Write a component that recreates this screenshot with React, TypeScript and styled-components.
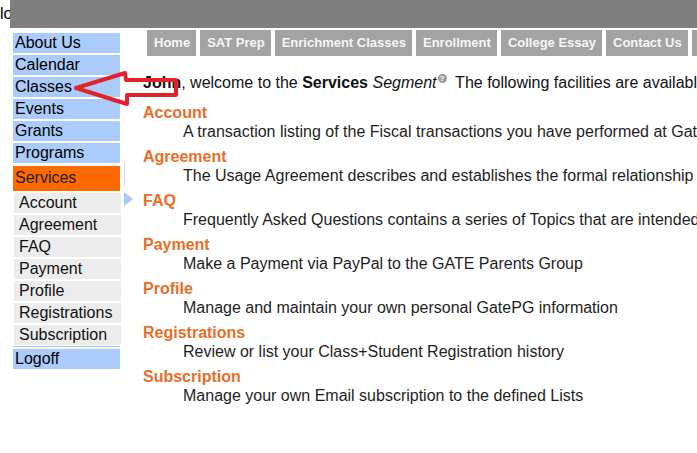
import React from 'react';
import styled, { createGlobalStyle } from 'styled-components';

const mainLinks = ['About Us', 'Calendar', 'Classes', 'Events', 'Grants', 'Programs'];
const subLinks = ['Account', 'Agreement', 'FAQ', 'Payment', 'Profile', 'Registrations', 'Subscription'];
const tabs = ['Home', 'SAT Prep', 'Enrichment Classes', 'Enrollment', 'College Essay', 'Contact Us', 'Log'];

const sections = [
  { title: 'Account', text: 'A transaction listing of the Fiscal transactions you have performed at GatePG' },
  { title: 'Agreement', text: 'The Usage Agreement describes and establishes the formal relationship between' },
  { title: 'FAQ', text: 'Frequently Asked Questions contains a series of Topics that are intended to help' },
  { title: 'Payment', text: 'Make a Payment via PayPal to the GATE Parents Group' },
  { title: 'Profile', text: 'Manage and maintain your own personal GatePG information' },
  { title: 'Registrations', text: 'Review or list your Class+Student Registration history' },
  { title: 'Subscription', text: 'Manage your own Email subscription to the defined Lists' },
];

const App: React.FC = () => {
  return (
    <Page>
      <GlobalStyle />
      <Header>
        <LogoCell>logo</LogoCell>
        <GrayBar />
      </Header>
      <Body>
        <Sidebar>
          {mainLinks.map((l) => (
            <NavItem key={l}>{l}</NavItem>
          ))}
          <ActiveItem>Services</ActiveItem>
          {subLinks.map((l) => (
            <SubItem key={l}>{l}</SubItem>
          ))}
          <Divider />
          <NavItem>Logoff</NavItem>
        </Sidebar>
        <Gutter>
          <GutterLine />
          <Pointer />
        </Gutter>
        <Main>
          <Tabs>
            {tabs.map((t) => (
              <Tab key={t}>{t}</Tab>
            ))}
          </Tabs>
          <Welcome>
            <b>John</b>, welcome to the <b>Services</b> <i>Segment</i>
            <Help>?</Help>&nbsp; The following facilities are available to you:
          </Welcome>
          <SectionList>
            {sections.map((s) => (
              <Section key={s.title}>
                <SectionTitle>{s.title}</SectionTitle>
                <SectionText>{s.text}</SectionText>
              </Section>
            ))}
          </SectionList>
        </Main>
      </Body>
      <Arrow width="110" height="40" viewBox="0 0 110 40">
        <polygon
          points="3,18 52,3 53,10 103,10 103,25 54,25 54,34"
          fill="none"
          stroke="#e0232b"
          strokeWidth="4"
          strokeLinejoin="round"
        />
      </Arrow>
    </Page>
  );
};

const GlobalStyle = createGlobalStyle`
  html, body {
    margin: 0;
    padding: 0;
    background: #fff;
    overflow: hidden;
  }
  body {
    font-family: "Liberation Sans", Arial, sans-serif;
  }
`;

const Page = styled.div`
  position: relative;
  width: 697px;
  height: 453px;
  overflow: hidden;
`;

const Header = styled.div`
  display: flex;
  height: 28px;
`;

const LogoCell = styled.div`
  width: 10px;
  overflow: hidden;
  font-size: 16px;
  line-height: 16px;
  padding-top: 6px;
  color: #000;
  white-space: nowrap;
`;

const GrayBar = styled.div`
  flex: 1;
  background: #7f7f7f;
`;

const Body = styled.div`
  display: grid;
  grid-template-columns: 13px 107px 20px 1fr;
  margin-top: 2px;
`;

const Sidebar = styled.nav`
  grid-column: 2;
  display: flex;
  flex-direction: column;
  gap: 2px;
  padding-top: 3px;
`;

const NavItem = styled.div`
  height: 20px;
  line-height: 20px;
  padding-left: 2px;
  font-size: 16px;
  color: #000;
  background: #abcbfa;
`;

const ActiveItem = styled(NavItem)`
  height: 25px;
  line-height: 23px;
  margin-top: 1px;
  background: #ff6a00;
  color: #1e1e1e;
`;

const SubItem = styled.div`
  height: 20px;
  line-height: 20px;
  margin-left: 1px;
  margin-right: -1px;
  padding-left: 5px;
  font-size: 16px;
  color: #111;
  background: #ececec;
`;

const Divider = styled.div`
  height: 1px;
  margin: -1px 0 0;
  background: #abcbfa;
`;

const Gutter = styled.div`
  display: flex;
  flex-direction: column;
  align-items: flex-start;
  padding-top: 133px;
  padding-left: 4px;
`;

const GutterLine = styled.div`
  width: 1px;
  height: 22px;
  background: #c9dcf6;
`;

const Pointer = styled.div`
  margin-top: 7px;
  width: 0;
  height: 0;
  border-top: 7px solid transparent;
  border-bottom: 7px solid transparent;
  border-left: 9px solid #a9c6f4;
`;

const Main = styled.main`
  min-width: 0;
  overflow: hidden;
  white-space: nowrap;
  padding-left: 3px;
`;

const Tabs = styled.div`
  display: flex;
  gap: 4px;
  padding-left: 4px;
`;

const Tab = styled.div`
  flex-shrink: 0;
  height: 26px;
  line-height: 26px;
  padding: 0 6px 0 7px;
  background: #a3a3a3;
  color: #f6f6f6;
  font-size: 13px;
  font-weight: bold;
`;

const Welcome = styled.div`
  margin-top: 18px;
  font-size: 16px;
  line-height: 18px;
  color: #111;
`;

const Help = styled.span`
  display: inline-block;
  width: 9px;
  height: 9px;
  border-radius: 50%;
  background: #9a9a9a;
  color: #fff;
  font-size: 8px;
  line-height: 9px;
  text-align: center;
  font-weight: bold;
  vertical-align: 7px;
  margin-left: 1px;
`;

const SectionList = styled.div`
  margin-top: 11px;
  display: flex;
  flex-direction: column;
  gap: 6px;
`;

const Section = styled.div``;

const SectionTitle = styled.div`
  font-size: 16px;
  line-height: 19px;
  font-weight: bold;
  color: #e86e28;
`;

const SectionText = styled.div`
  font-size: 16px;
  line-height: 19px;
  color: #1e1e1e;
  padding-left: 40px;
`;

const Arrow = styled.svg`
  position: absolute;
  left: 73px;
  top: 70px;
`;

export default App;
